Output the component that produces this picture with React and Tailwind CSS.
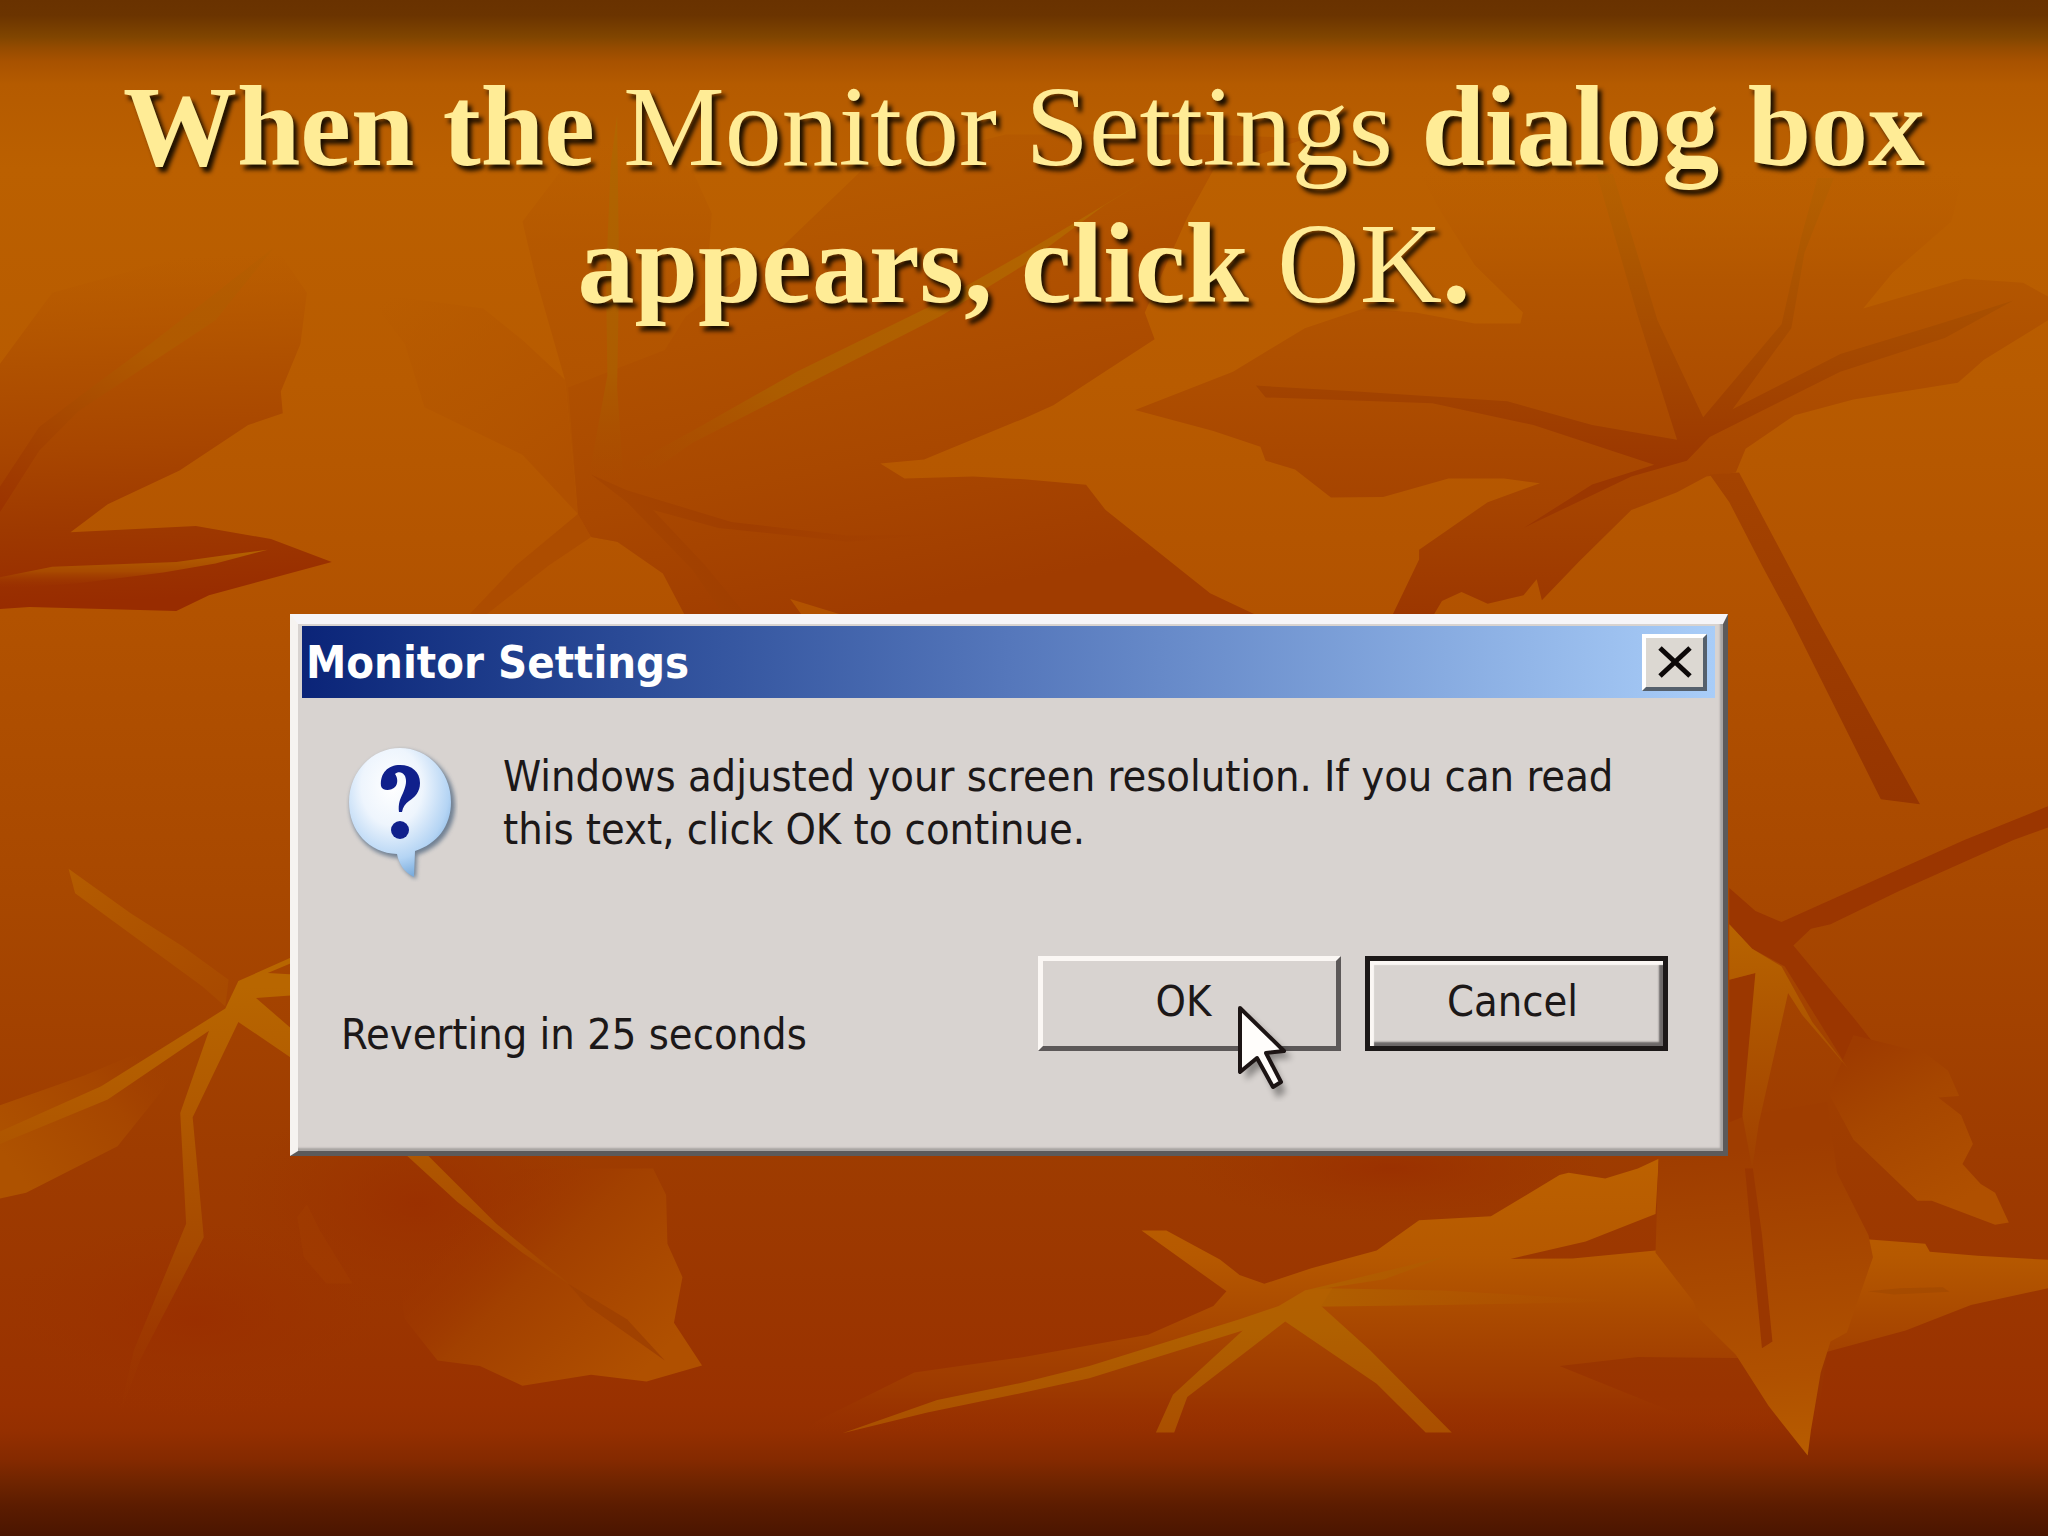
import React from "react";

function Stop({ o, c, a = 1 }) {
  return <stop offset={o} stopColor={c} stopOpacity={a} />;
}

function LeafBackdrop() {
  return (
    <svg
      className="absolute inset-0 h-full w-full"
      viewBox="0 0 1568 1176"
      preserveAspectRatio="none"
      aria-hidden="true"
    >
      <defs>
        <linearGradient id="sky" x1="0" y1="0" x2="0" y2="1">
          <Stop o="0" c="#693200" />
          <Stop o="0.01" c="#6b3400" />
          <Stop o="0.024" c="#804500" />
          <Stop o="0.031" c="#944b00" />
          <Stop o="0.04" c="#a85200" />
          <Stop o="0.055" c="#b55b00" />
          <Stop o="0.11" c="#bb6000" />
          <Stop o="0.25" c="#b85b00" />
          <Stop o="0.4" c="#b25200" />
          <Stop o="0.58" c="#a84800" />
          <Stop o="0.75" c="#9e3c00" />
          <Stop o="0.86" c="#9b3500" />
          <Stop o="0.915" c="#993100" />
          <Stop o="0.932" c="#942f00" />
          <Stop o="0.95" c="#852a00" />
          <Stop o="0.966" c="#6e2400" />
          <Stop o="0.98" c="#5c1c00" />
          <Stop o="1" c="#4a1500" />
        </linearGradient>
        <linearGradient id="leafA" gradientUnits="userSpaceOnUse" x1="120" y1="660" x2="180" y2="1520">
          <Stop o="0" c="#b55600" a={0} />
          <Stop o="0.3" c="#b05100" />
          <Stop o="0.55" c="#a84600" />
          <Stop o="0.78" c="#9e3900" />
          <Stop o="1" c="#982c00" />
        </linearGradient>
        <linearGradient id="veinA" gradientUnits="userSpaceOnUse" x1="400" y1="640" x2="0" y2="1280">
          <Stop o="0" c="#b05e00" a={0.3} />
          <Stop o="0.4" c="#b05a00" />
          <Stop o="0.65" c="#a84a00" />
          <Stop o="1" c="#9c3400" />
        </linearGradient>
        <linearGradient id="veinA2" gradientUnits="userSpaceOnUse" x1="0" y1="1400" x2="0" y2="1490">
          <Stop o="0" c="#b35f00" />
          <Stop o="0.5" c="#a84a00" />
          <Stop o="1" c="#9a2f00" a={0} />
        </linearGradient>
        <linearGradient id="leafB" gradientUnits="userSpaceOnUse" x1="900" y1="400" x2="1300" y2="1560">
          <Stop o="0" c="#b55a00" a={0.6} />
          <Stop o="0.4" c="#b05100" />
          <Stop o="0.7" c="#a94800" />
          <Stop o="1" c="#a03c00" />
        </linearGradient>
        <linearGradient id="leafBTop" gradientUnits="userSpaceOnUse" x1="0" y1="360" x2="0" y2="1370">
          <Stop o="0" c="#b55900" a={0} />
          <Stop o="0.25" c="#b45700" a={0.8} />
          <Stop o="1" c="#ad4d00" />
        </linearGradient>
        <linearGradient id="leafBSide" gradientUnits="userSpaceOnUse" x1="560" y1="800" x2="960" y2="1100">
          <Stop o="0" c="#b35500" a={0} />
          <Stop o="0.5" c="#b35500" a={0.7} />
          <Stop o="1" c="#b05000" />
        </linearGradient>
        <linearGradient id="veinB" gradientUnits="userSpaceOnUse" x1="0" y1="290" x2="0" y2="1220">
          <Stop o="0" c="#b26600" />
          <Stop o="0.7" c="#ac5c00" />
          <Stop o="1" c="#a84e00" a={0} />
        </linearGradient>
        <linearGradient id="veinB2" gradientUnits="userSpaceOnUse" x1="1850" y1="350" x2="960" y2="1200">
          <Stop o="0" c="#b46600" a={0.3} />
          <Stop o="0.2" c="#b46600" />
          <Stop o="0.75" c="#ac5c00" />
          <Stop o="1" c="#a84e00" a={0} />
        </linearGradient>
        <linearGradient id="veinB3" gradientUnits="userSpaceOnUse" x1="940" y1="0" x2="1450" y2="0">
          <Stop o="0" c="#a54500" />
          <Stop o="0.4" c="#a03e00" />
          <Stop o="1" c="#a23e00" a={0} />
        </linearGradient>
        <linearGradient id="leafC" gradientUnits="userSpaceOnUse" x1="0" y1="430" x2="0" y2="1550">
          <Stop o="0" c="#b95d00" a={0} />
          <Stop o="0.25" c="#b35600" />
          <Stop o="0.5" c="#ad4d00" />
          <Stop o="0.75" c="#a64400" />
          <Stop o="1" c="#9c3700" />
        </linearGradient>
        <linearGradient id="veinC" gradientUnits="userSpaceOnUse" x1="0" y1="430" x2="0" y2="1180">
          <Stop o="0" c="#b06200" a={0.4} />
          <Stop o="0.35" c="#ab5400" />
          <Stop o="0.7" c="#a34500" />
          <Stop o="1" c="#9b3700" />
        </linearGradient>
        <linearGradient id="stemC" gradientUnits="userSpaceOnUse" x1="0" y1="1200" x2="0" y2="2034">
          <Stop o="0" c="#a44300" />
          <Stop o="1" c="#963500" />
        </linearGradient>
        <linearGradient id="veinD" gradientUnits="userSpaceOnUse" x1="0" y1="330" x2="0" y2="1320">
          <Stop o="0" c="#b86600" />
          <Stop o="0.3" c="#b05800" />
          <Stop o="0.6" c="#a64900" />
          <Stop o="1" c="#9a3300" a={0} />
        </linearGradient>
        <linearGradient id="twigD" gradientUnits="userSpaceOnUse" x1="105" y1="65" x2="350" y2="330">
          <Stop o="0" c="#b45c00" />
          <Stop o="1" c="#a84a00" />
        </linearGradient>
        <linearGradient id="bladeD" gradientUnits="userSpaceOnUse" x1="0" y1="700" x2="300" y2="540">
          <Stop o="0" c="#ae5200" />
          <Stop o="0.6" c="#a64600" />
          <Stop o="1" c="#a03e00" a={0} />
        </linearGradient>
        <linearGradient id="bladeD2" gradientUnits="userSpaceOnUse" x1="660" y1="880" x2="1030" y2="1130">
          <Stop o="0" c="#9c3300" a={0} />
          <Stop o="0.4" c="#a24000" />
          <Stop o="1" c="#b05000" />
        </linearGradient>
        <linearGradient id="stripeD" gradientUnits="userSpaceOnUse" x1="0" y1="700" x2="0" y2="1010">
          <Stop o="0" c="#b05700" />
          <Stop o="1" c="#a54500" />
        </linearGradient>
        <linearGradient id="leafE" gradientUnits="userSpaceOnUse" x1="0" y1="720" x2="0" y2="1335">
          <Stop o="0" c="#bc6100" />
          <Stop o="0.35" c="#b65900" />
          <Stop o="0.6" c="#a94800" />
          <Stop o="0.85" c="#9d3900" />
          <Stop o="1" c="#983000" a={0} />
        </linearGradient>
        <linearGradient id="veinE" gradientUnits="userSpaceOnUse" x1="0" y1="950" x2="0" y2="1335">
          <Stop o="0" c="#b66000" />
          <Stop o="0.4" c="#b06000" />
          <Stop o="1" c="#aa4f00" />
        </linearGradient>
        <linearGradient id="veinFade" gradientUnits="userSpaceOnUse" x1="2000" y1="0" x2="2500" y2="0">
          <Stop o="0" c="#b06000" />
          <Stop o="1" c="#b05600" a={0} />
        </linearGradient>
        <linearGradient id="darkE" gradientUnits="userSpaceOnUse" x1="0" y1="1165" x2="0" y2="1335">
          <Stop o="0" c="#9a3600" />
          <Stop o="0.5" c="#993300" />
          <Stop o="1" c="#983000" a={0} />
        </linearGradient>
        <linearGradient id="leafF" gradientUnits="userSpaceOnUse" x1="2660" y1="700" x2="2760" y2="1380">
          <Stop o="0" c="#9f3d00" />
          <Stop o="0.4" c="#a84800" />
          <Stop o="0.75" c="#b05100" />
          <Stop o="1" c="#b75c00" />
        </linearGradient>
        <linearGradient id="veinF" gradientUnits="userSpaceOnUse" x1="0" y1="190" x2="0" y2="740">
          <Stop o="0" c="#b86400" />
          <Stop o="0.5" c="#ac5200" />
          <Stop o="1" c="#a04000" />
        </linearGradient>
        <linearGradient id="leafG" gradientUnits="userSpaceOnUse" x1="2800" y1="500" x2="3040" y2="780">
          <Stop o="0" c="#9e3b00" />
          <Stop o="0.4" c="#a64600" />
          <Stop o="1" c="#b05000" />
        </linearGradient>
        <radialGradient id="glow">
          <Stop o="0" c="#9a2e00" a={0.8} />
          <Stop o="1" c="#9c3400" a={0} />
        </radialGradient>
      </defs>
      <rect width="1568" height="1176" fill="url(#sky)" />

      {/* upper leaves */}
      <g transform="scale(0.5 0.30276)">
        <path fill="url(#leafA)" d="M0 920 80 740 300 640 420 620 470 740 460 870 430 990 433 1045 380 1075 275 1190 165 1275 108 1346 300 1330 415 1363 508 1421 320 1505 270 1545 45 1535 0 1540Z" />
        <path fill="url(#veinA)" d="M0 1230 60 1080 140 980 230 870 420 625 330 810 220 930 120 1040 60 1140 0 1295Z" />
        <path fill="url(#veinA2)" d="M0 1460 80 1433 270 1421 350 1403 410 1390 330 1425 250 1448 120 1475 0 1490Z" />

        <path fill="url(#leafBTop)" d="M865 960 820 700 800 560 860 430 945 290 1060 430 1090 540 1080 760 1050 1370 945 1370 905 1358 885 1300Z" />
        <path fill="url(#leafBSide)" d="M560 740 740 780 800 860 865 960 885 1300 800 1150 650 1030 620 870Z" />
        <path fill="url(#leafB)" d="M870 980 1018 885 1050 800 1200 620 1320 430 1540 340 1850 340 2000 350 1858 430 1818 550 1753 790 1768 858 1613 1025 1568 1058 1415 1162 1348 1172 1385 1210 1490 1205 1568 1212 1663 1226 1693 1290 1853 1500 1930 1560 1300 1560 1210 1515 1230 1560 1050 1560 1015 1450 945 1370 905 1358 885 1300Z" />
        <path fill="url(#veinB)" d="M935 420 945 290 948 700 945 980 955 1220 900 1220 930 950 928 700Z" />
        <path fill="url(#veinB2)" d="M1780 430 1690 520 1568 670 1440 800 1250 960 1060 1120 1000 1190 960 1180 1060 1090 1220 940 1430 770 1568 640 1740 470 1880 330Z" />
        <path fill="url(#veinB3)" d="M905 1200 960 1240 1120 1320 1300 1355 1450 1350 1300 1370 1100 1335 1000 1290 1080 1430 1145 1560 1110 1560 1060 1440 960 1270Z" />
        <path fill="#ab4b00" opacity="0.8" d="M885 1300 905 1358 840 1430 740 1560 715 1560 790 1430Z" />

        <path fill="url(#leafC)" d="M1738 1037 1888 940 1998 830 2088 780 2168 790 2258 818 2328 818 2332 790 2258 670 2208 540 2168 420 2468 400 2818 430 3008 430 2988 560 2898 690 2853 780 3008 705 3098 715 3136 750 3136 810 3038 910 2998 968 2838 1010 2748 1050 2673 1135 2658 1195 2613 1205 2568 1245 2498 1290 2418 1420 2361 1518 2353 1465 2333 1505 2278 1527 2238 1497 2208 1520 2190 1570 2128 1570 2173 1415 2173 1390 2278 1270 2358 1222 2303 1210 2218 1210 2118 1257 2038 1258 1983 1187 1938 1165 1930 1130 1858 1090Z" />
        <path fill="url(#stemC)" d="M2618 1200 2648 1270 2698 1430 2743 1568 2880 2021 2940 2034 2783 1568 2663 1195Z" />
        <path fill="url(#veinC)" d="M2568 1112 2508 800 2445 440 2470 440 2538 810 2608 1055 2728 820 2758 600 2783 450 2808 450 2763 640 2743 830 2653 1035 2818 895 2968 820 3083 760 2978 855 2818 940 2618 1105 2583 1165 2498 1205 2333 1335 2438 1225 2533 1175 2348 1075 2193 1020 1938 1005 1923 975 2078 990 2308 1015 2438 1075Z" />
      </g>

      {/* lower leaves */}
      <g transform="translate(0 643.1) scale(0.5 0.3398)">
        <ellipse cx="640" cy="820" rx="280" ry="260" fill="url(#glow)" />
        <ellipse cx="300" cy="1080" rx="300" ry="220" fill="url(#glow)" />
        <ellipse cx="2130" cy="740" rx="320" ry="125" fill="url(#glow)" />

        <path fill="url(#bladeD)" d="M0 598 130 530 260 450 300 470 180 690 40 795 0 808Z" />
        <path fill="url(#twigD)" d="M105 65 200 165 280 240 350 315 345 375 310 330 115 120Z" />
        <path fill="url(#veinD)" d="M365 318 450 262 450 275 410 300 450 303 450 350 392 356 450 430 450 495 365 410 295 625 312 895 215 1170 180 1310 205 1150 285 865 276 615 320 430 165 585 0 685 0 657 155 555 345 380Z" />
        <path fill="#a54300" opacity="0.3" d="M470 820 490 880 540 1000 500 1000 465 940 455 850Z" />
        <path fill="url(#bladeD2)" d="M800 740 1000 740 1020 800 1022 910 1045 985 1032 1088 1075 1184 990 1220 905 1205 800 1230 735 1185 670 1173 620 1080 600 900Z" />
        <path fill="url(#stripeD)" d="M615 700 648 700 760 865 880 1010 800 930 700 815Z" />
        <path fill="#a04100" d="M870 1000 960 1080 1018 1173 900 1050Z" />

        <path fill="url(#leafE)" d="M1748 880 1786 880 1868 945 1898 980 1936 1000 2008 965 2108 925 2173 857 2283 848 2388 755 2402 750 2458 763 2508 740 2540 718 2535 843 2428 905 2313 944 2408 943 2535 925 2863 900 2948 910 2955 928 3028 937 3136 946 3136 1010 3018 1048 2918 1105 2798 1153 2700 1335 1230 1335 1250 1310 1400 1200 1568 1165 1758 1115 1858 1050 1878 1017Z" />
        <path fill="url(#darkE)" d="M2388 1185 2508 1165 2658 1167 2798 1153 2780 1335 2640 1335 2438 1215Z" />
        <path fill="url(#veinFade)" d="M1998 1015 2168 955 2220 935 2120 990 2030 1010 2208 1015 2500 1040 2208 1048 2010 1052Z" />
        <path fill="url(#veinE)" d="M1290 1337 1435 1262 1568 1222 1668 1185 1898 1080 1958 1050 1998 1015 2040 1010 2023 1050 2098 1150 2223 1335 2183 1335 2108 1225 1968 1085 1818 1255 1798 1335 1770 1335 1796 1250 1903 1105 1668 1213 1568 1245 1420 1290Z" />
        <path fill="#a64b00" d="M2860 1017 2910 1010 2975 1008 2985 1018 2900 1024Z" />

        <path fill="#9b3600" d="M2648 108 2688 160 2728 185 3008 0 3136 -76 3136 -28 3083 0 2908 115 2803 190 2773 200 2746 238 2838 400 2870 460 2830 515 2733 285 2683 245 2648 190Z" />
        <path fill="#9b3700" d="M2648 315 2688 300 2670 740 2648 740Z" />
        <path fill="url(#leafG)" d="M2838 440 2948 480 2983 520 3000 577 2968 580 3003 620 3021 685 3005 730 3033 775 3055 795 3076 862 3055 867 2958 813 2936 813 2838 675 2800 570Z" />
        <path fill="url(#leafF)" d="M2540 700 2675 620 2798 590 2813 750 2861 890 2868 940 2828 1110 2803 1130 2788 1200 2773 1330 2768 1387 2708 1275 2658 1160 2603 1080 2593 1040 2535 930Z" />
        <path fill="url(#veinF)" d="M2648 190 2683 245 2728 285 2775 410 2830 515 2760 395 2738 345 2693 640 2683 740 2668 620 2688 300 2648 315Z" />
        <path fill="#9a3700" d="M2672 740 2684 740 2698 890 2714 1130 2698 1145Z" />
      </g>
    </svg>
  );
}

function QuestionIcon() {
  return (
    <svg className="h-[136px] w-[112px] shrink-0" viewBox="0 0 112 136" role="img" aria-label="Question">
      <defs>
        <radialGradient id="bubble" cx="0.42" cy="0.3" r="0.75">
          <stop offset="0" stopColor="#ffffff" />
          <stop offset="0.4" stopColor="#eef5fd" />
          <stop offset="0.75" stopColor="#b4d4f4" />
          <stop offset="1" stopColor="#6ea4d8" />
        </radialGradient>
        <filter id="soft" x="-20%" y="-20%" width="140%" height="140%">
          <feGaussianBlur stdDeviation="2" />
        </filter>
      </defs>
      <path filter="url(#soft)" fill="#5f7288" opacity="0.85" d="M56 4C84 4 109 28 109 59c0 24-15 43-38 50l-1 24C60 128 55 120 53 112 24 110 4 88 4 59 4 28 28 4 56 4Z" />
      <path fill="url(#bubble)" d="M54 2C82 2 105 26 105 56c0 24-14 42-36 49l-1 26C58 126 53 118 51 108 23 107 3 85 3 56 3 26 26 2 54 2Z" />
      <path fill="#10208c" d="M35 40C34 27 42 19 54 19c12 0 20 7 20 18 0 9-5 14-11 18-4 3-6 6-7 11h-3c-1-8 1-13 4-19 3-7 4-12 2-17-2-4-7-5-10-2 3 4 3 10 0 13-4 4-13 4-14-1Z" />
      <circle cx="54" cy="84" r="9" fill="#10208c" />
    </svg>
  );
}

function Pointer() {
  return (
    <svg className="pointer-events-none absolute top-12 left-[198px] h-[98px] w-[66px]" viewBox="0 0 66 98" aria-hidden="true">
      <defs>
        <filter id="blur" x="-30%" y="-30%" width="160%" height="160%">
          <feGaussianBlur stdDeviation="3" />
        </filter>
      </defs>
      <path filter="url(#blur)" fill="#000" opacity="0.35" d="M10 10 56 54 36 56 50 88 41 94 27 62 10 76Z" />
      <path fill="#fffdfb" stroke="#1c1414" strokeWidth="4" strokeLinejoin="round" d="M4 4 48 47 30 49 45 78 37 83 21 54 4 68Z" />
    </svg>
  );
}

export default function App() {
  return (
    <main className="relative flex min-h-screen w-full flex-col overflow-hidden bg-[#a84800]">
      <LeafBackdrop />
      <h1 className="relative mx-auto px-10 pt-[58px] text-center font-['Liberation_Serif',serif] text-[114px] leading-[137px] font-bold text-[#ffec96] [text-shadow:4px_5px_4px_rgba(20,12,0,0.95)]">
        When the <span className="font-normal">Monitor Settings</span> dialog box
        <br />
        appears, click <span className="font-normal">OK</span>.
      </h1>

      <section
        role="dialog"
        aria-labelledby="dialog-title"
        className="relative mt-[282px] mr-[320px] ml-[290px] flex flex-col border-t-10 border-r-5 border-b-5 border-l-8 border-t-[#f6f5f8] border-r-[#5c5a5a] border-b-[#5c5a5a] border-l-[#f6f3f0] bg-[#d8d3d0] font-['DejaVu_Sans_Condensed','DejaVu_Sans',sans-serif] text-[43px] leading-[53px] text-[#1c1818] shadow-[inset_-3px_-3px_2px_#a8a4a2]"
      >
        <header className="mt-[2px] mr-2 ml-1 flex h-[72px] items-center justify-between bg-linear-to-r from-[#0b2478] via-[#5577bb] to-[#a9cdf8] pr-2 pl-1">
          <h2 id="dialog-title" className="text-[45px] font-bold whitespace-nowrap text-white">Monitor Settings</h2>
          <button
            type="button"
            aria-label="Close"
            className="flex h-[57px] w-[65px] items-center justify-center border-4 border-t-white border-r-[#55606c] border-b-[#55606c] border-l-white bg-[#dcd8d2]"
          >
            <svg className="h-8 w-9" viewBox="0 0 36 32" aria-hidden="true">
              <path d="M3 2 33 30M33 2 3 30" stroke="#0c0808" strokeWidth="5" fill="none" />
            </svg>
          </button>
        </header>

        <div className="flex gap-[45px] pt-12 pl-12">
          <QuestionIcon />
          <p className="pt-1 whitespace-nowrap">
            Windows adjusted your screen resolution. If you can read
            <br />
            this text, click OK to continue.
          </p>
        </div>

        <div className="mt-[74px] flex items-start justify-between pr-[55px] pb-[90px] pl-[43px]">
          <p className="pt-[52px] whitespace-nowrap">Reverting in 25 seconds</p>
          <div className="flex gap-6">
            <div className="relative">
              <button
                type="button"
                className="h-[95px] w-[303px] border-5 border-t-[#fbf7f4] border-r-[#5c5858] border-b-[#5c5858] border-l-[#fbf7f4] bg-[#d8d3d0] pr-3 pb-1"
              >
                OK
              </button>
              <Pointer />
            </div>
            <button
              type="button"
              className="h-[95px] w-[303px] border-5 border-[#1c1818] bg-[#d8d3d0] pr-2 pb-1 shadow-[inset_4px_4px_1px_#fbf7f4,inset_-4px_-4px_2px_#6c6868]"
            >
              Cancel
            </button>
          </div>
        </div>
      </section>
    </main>
  );
}
